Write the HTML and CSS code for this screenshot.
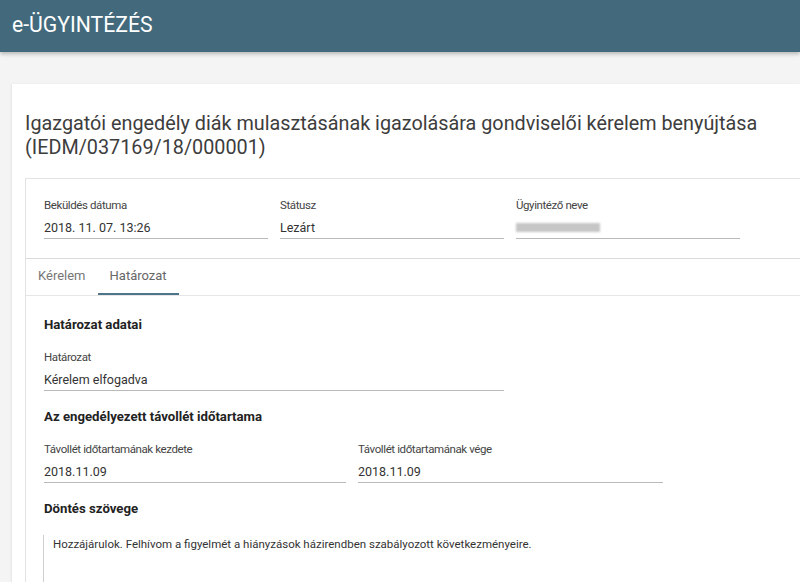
FILE: index.html
```html
<!DOCTYPE html>
<html lang="hu">
<head>
    <meta charset="UTF-8">
    <title>e-ÜGYINTÉZÉS</title>
    <link rel="stylesheet" href="styles.css">
</head>
<body>

    <header class="topbar">e-ÜGYINTÉZÉS</header>

    <main class="page">
        <div class="card">
            <h1 class="title">Igazgatói engedély diák mulasztásának igazolására gondviselői kérelem benyújtása (IEDM/037169/18/000001)</h1>

            <div class="panel">
                <div class="summary">
                    <div class="field w224">
                        <div class="label">Beküldés dátuma</div>
                        <div class="value">2018. 11. 07. 13:26</div>
                    </div>
                    <div class="field w224">
                        <div class="label">Státusz</div>
                        <div class="value">Lezárt</div>
                    </div>
                    <div class="field w224">
                        <div class="label">Ügyintéző neve</div>
                        <div class="value"><span class="redacted"></span></div>
                    </div>
                </div>

                <nav class="tabs">
                    <div class="tab">Kérelem</div>
                    <div class="tab active">Határozat</div>
                </nav>

                <div class="tab-body">
                    <h2 class="section">Határozat adatai</h2>
                    <div class="row">
                        <div class="field w460">
                            <div class="label">Határozat</div>
                            <div class="value">Kérelem elfogadva</div>
                        </div>
                    </div>

                    <h2 class="section">Az engedélyezett távollét időtartama</h2>
                    <div class="row">
                        <div class="field w302">
                            <div class="label">Távollét időtartamának kezdete</div>
                            <div class="value">2018.11.09</div>
                        </div>
                        <div class="field w305">
                            <div class="label">Távollét időtartamának vége</div>
                            <div class="value">2018.11.09</div>
                        </div>
                    </div>

                    <h2 class="section">Döntés szövege</h2>
                    <div class="textbox">Hozzájárulok. Felhívom a figyelmét a hiányzások házirendben szabályozott következményeire.</div>
                </div>
            </div>
        </div>
    </main>

</body>
</html>
```

FILE: styles.css
```css
body {
    margin: 0;
    background: #f4f4f4;
    font-family: Roboto, 'Liberation Sans', sans-serif;
    color: #333;
    overflow: hidden;
}

.topbar {
    height: 52px;
    line-height: 50px;
    padding-left: 12px;
    background: #436a7c;
    color: #fff;
    font-size: 21.2px;
    box-shadow: 0 2px 4px rgba(0, 0, 0, 0.25);
}

.page {
    padding: 32px 0 0 12px;
}

.card {
    background: #fff;
    padding: 28px 0 0 13px;
    min-height: calc(100vh - 112px);
    box-shadow: -1px 0 2px rgba(0, 0, 0, 0.06);
}

.title {
    margin: 0 0 18px 0;
    font-size: 19.8px;
    font-weight: normal;
    line-height: 24px;
    color: #3d3d3d;
    padding-right: 20px;
}

.panel {
    border: 1px solid #e3e3e3;
    border-right: none;
    border-bottom: none;
}

.summary {
    display: flex;
    gap: 12px;
    padding: 18px 0 19px 18px;
    border-bottom: 1px solid #dcdcdc;
}

.field {
    border-bottom: 1px solid #b9b9b9;
}

.w224 { width: 224px; }
.w460 { width: 460px; }
.w302 { width: 302px; }
.w305 { width: 305px; }

.label {
    font-size: 11.5px;
    letter-spacing: -0.4px;
    line-height: 16px;
    margin-bottom: 5px;
    color: #444;
}

.value {
    font-size: 12.5px;
    line-height: 20px;
    height: 20px;
    color: #333;
}

.redacted {
    display: inline-block;
    width: 84px;
    height: 9px;
    margin-top: 5px;
    background: #c6c6c6;
    filter: blur(0.8px);
    vertical-align: top;
}

.tabs {
    display: flex;
    border-bottom: 1px solid #e6e6e6;
    height: 36px;
}

.tab {
    padding: 0 12px;
    font-size: 13px;
    line-height: 34px;
    color: #777;
    border-bottom: 2px solid transparent;
}

.tab.active {
    color: #666;
    border-bottom-color: #4d7489;
}

.tab-body {
    padding: 19px 0 0 18px;
}

.section {
    margin: 0;
    font-size: 13.2px;
    font-weight: bold;
    line-height: 20px;
    color: #222;
}

.row {
    display: flex;
    gap: 12px;
    margin: 14px 0 16px 0;
}

.textbox {
    margin: 16px 0 0 -1px;
    border-left: 1px solid #cfcfcf;
    padding: 1px 0 0 9px;
    height: 48px;
    font-size: 11.5px;
    line-height: 16px;
    color: #333;
}
```
